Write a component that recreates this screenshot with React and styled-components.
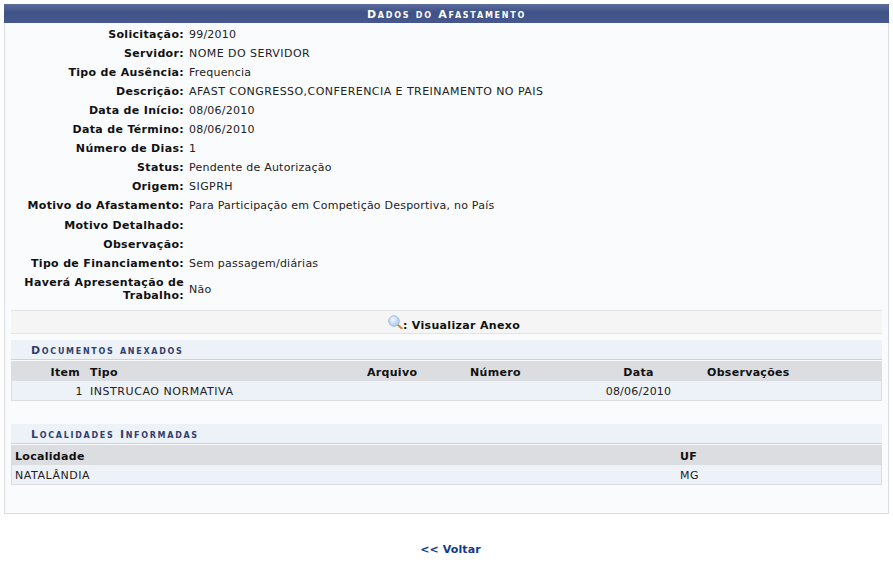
import React from "react";
import styled, { createGlobalStyle } from "styled-components";

const Global = createGlobalStyle`
  html, body { margin: 0; padding: 0; background: #fff; }
  body { font-family: "DejaVu Sans", Verdana, sans-serif; font-size: 11px; color: #111; }
`;
const Page = styled.div`
  padding: 4px 4px 0 4px;
  width: 885px;
`;
const Panel = styled.section`
  background: #f9fbfd;
  border: 1px solid #dcdde0;
  border-top: 0;
  height: 510px;
  box-sizing: border-box;
`;
const PanelTitle = styled.h3`
  margin: 0 -1px;
  height: 19px;
  line-height: 21px;
  text-align: center;
  font-size: 11px;
  font-weight: bold;
  font-variant: small-caps;
  letter-spacing: 1.75px;
  color: #fff;
  background: linear-gradient(#5b6d9c, #3f5288 45%, #46588c);
`;
const Details = styled.div`
  display: grid;
  grid-template-columns: 179px 1fr;
  column-gap: 5px;
  padding-top: 2px;
`;
const Label = styled.div`
  font-weight: bold;
  letter-spacing: 0.33px;
  text-align: right;
  height: ${(p) => p.$h}px;
  line-height: 13px;
  display: flex;
  align-items: center;
  justify-content: flex-end;
`;
const Value = styled.div`
  height: ${(p) => p.$h}px;
  display: flex;
  align-items: center;
  color: #222;
  letter-spacing: ${(p) => (p.$caps ? 0.45 : 0.22)}px;
`;
const Content = styled.div`
  padding: 0 6px;
`;
const AttachBar = styled.div`
  margin-top: 5px;
  height: 22px;
  padding-left: 15px;
  background: #f5f5f5;
  border-top: 1px solid #e4e4e4;
  border-bottom: 1px solid #e4e4e4;
  display: flex;
  align-items: flex-end;
  justify-content: center;
  font-weight: bold;
  letter-spacing: 0.33px;
  color: #111;
  line-height: 15px;
`;
const LensIcon = styled.svg`
  width: 15px;
  height: 15px;
  margin-bottom: 3px;
  flex: none;
`;
const SectionTitle = styled.h4`
  margin: ${(p) => p.$mt}px 0 0;
  height: 19px;
  line-height: 22px;
  padding-left: 20px;
  background: #edf1f8;
  border-bottom: 1px solid #c8d2e4;
  font-size: 11px;
  font-weight: bold;
  font-variant: small-caps;
  letter-spacing: 1.7px;
  color: #2f3f70;
`;
const DataTable = styled.table`
  width: 100%;
  margin: 1px 0 1px;
  border-collapse: separate;
  border-spacing: 0;
  table-layout: fixed;
  font-size: 11px;
  border: 0;
  border-bottom: 1px solid #dcdde0;
  border-left: 1px solid #dcdde0;
  border-right: 1px solid #dcdde0;
`;
const Head = styled.th`
  height: 20px;
  box-sizing: border-box;
  padding: 2px ${(p) => p.$pr ?? 4}px 0 ${(p) => p.$pl ?? 3}px;
  background: #dcdde0;
  font-weight: bold;
  letter-spacing: 0.3px;
  color: #111;
  text-align: ${(p) => p.$align || "left"};
`;
const Cell = styled.td`
  height: 19px;
  box-sizing: border-box;
  padding: 1px 4px 0 3px;
  background: #edf1f8;
  color: #222;
  letter-spacing: ${(p) => (p.$digits ? 0.22 : 0.55)}px;
  text-align: ${(p) => p.$align || "left"};
`;
const Footer = styled.div`
  margin-top: 29px;
  text-align: center;
`;
const BackLink = styled.a`
  font-weight: bold;
  color: #0f3a8a;
  text-decoration: none;
  margin-left: 8px;
  letter-spacing: 0.1px;
`;

const rows = [
  { label: "Solicitação:", value: "99/2010" },
  { label: "Servidor:", value: "NOME DO SERVIDOR", caps: true },
  { label: "Tipo de Ausência:", value: "Frequencia" },
  { label: "Descrição:", value: "AFAST CONGRESSO,CONFERENCIA E TREINAMENTO NO PAIS", caps: true },
  { label: "Data de Início:", value: "08/06/2010" },
  { label: "Data de Término:", value: "08/06/2010" },
  { label: "Número de Dias:", value: "1" },
  { label: "Status:", value: "Pendente de Autorização" },
  { label: "Origem:", value: "SIGPRH", caps: true },
  { label: "Motivo do Afastamento:", value: "Para Participação em Competição Desportiva, no País" },
  { label: "Motivo Detalhado:", value: "", h: 20 },
  { label: "Observação:", value: "" },
  { label: "Tipo de Financiamento:", value: "Sem passagem/diárias" },
  { label: "Haverá Apresentação de Trabalho:", value: "Não", h: 32 },
];

const Magnifier = () => (
  <LensIcon viewBox="0 0 15 15" aria-hidden="true">
    <defs>
      <radialGradient id="lens" cx="0.4" cy="0.35" r="0.7">
        <stop offset="0" stopColor="#f2f8ff" />
        <stop offset="1" stopColor="#a4c6ec" />
      </radialGradient>
    </defs>
    <path d="M10 10 L13.6 13.2" stroke="#c08a52" strokeWidth="2.2" strokeLinecap="round" />
    <circle cx="6" cy="6" r="5.3" fill="url(#lens)" stroke="#a5bedc" strokeWidth="1" />
  </LensIcon>
);

export default function App() {
  return (
    <Page>
      <Global />
      <Panel>
        <PanelTitle>Dados do Afastamento</PanelTitle>
        <Details>
          {rows.map(({ label, value, caps, h = 19 }) => (
            <React.Fragment key={label}>
              <Label $h={h}>
                <span>{label}</span>
              </Label>
              <Value $h={h} $caps={caps}>{value}</Value>
            </React.Fragment>
          ))}
        </Details>
        <Content>
          <AttachBar>
            <Magnifier />: Visualizar Anexo
          </AttachBar>
          <SectionTitle $mt={6}>Documentos anexados</SectionTitle>
          <DataTable>
            <colgroup>
              <col style={{ width: 75 }} />
              <col style={{ width: 277 }} />
              <col style={{ width: 103 }} />
              <col style={{ width: 135 }} />
              <col style={{ width: 74 }} />
              <col />
            </colgroup>
            <thead>
              <tr>
                <Head $align="right" $pr={7}>Item</Head>
                <Head>Tipo</Head>
                <Head>Arquivo</Head>
                <Head>Número</Head>
                <Head $align="center">Data</Head>
                <Head $pl={31}>Observações</Head>
              </tr>
            </thead>
            <tbody>
              <tr>
                <Cell $align="right">1</Cell>
                <Cell>INSTRUCAO NORMATIVA</Cell>
                <Cell />
                <Cell />
                <Cell $align="center" $digits>08/06/2010</Cell>
                <Cell />
              </tr>
            </tbody>
          </DataTable>
          <SectionTitle $mt={23}>Localidades Informadas</SectionTitle>
          <DataTable>
            <colgroup>
              <col style={{ width: 665 }} />
              <col />
            </colgroup>
            <thead>
              <tr>
                <Head>Localidade</Head>
                <Head>UF</Head>
              </tr>
            </thead>
            <tbody>
              <tr>
                <Cell>NATALÂNDIA</Cell>
                <Cell>MG</Cell>
              </tr>
            </tbody>
          </DataTable>
        </Content>
      </Panel>
      <Footer>
        <BackLink href="#">&lt;&lt; Voltar</BackLink>
      </Footer>
    </Page>
  );
}
